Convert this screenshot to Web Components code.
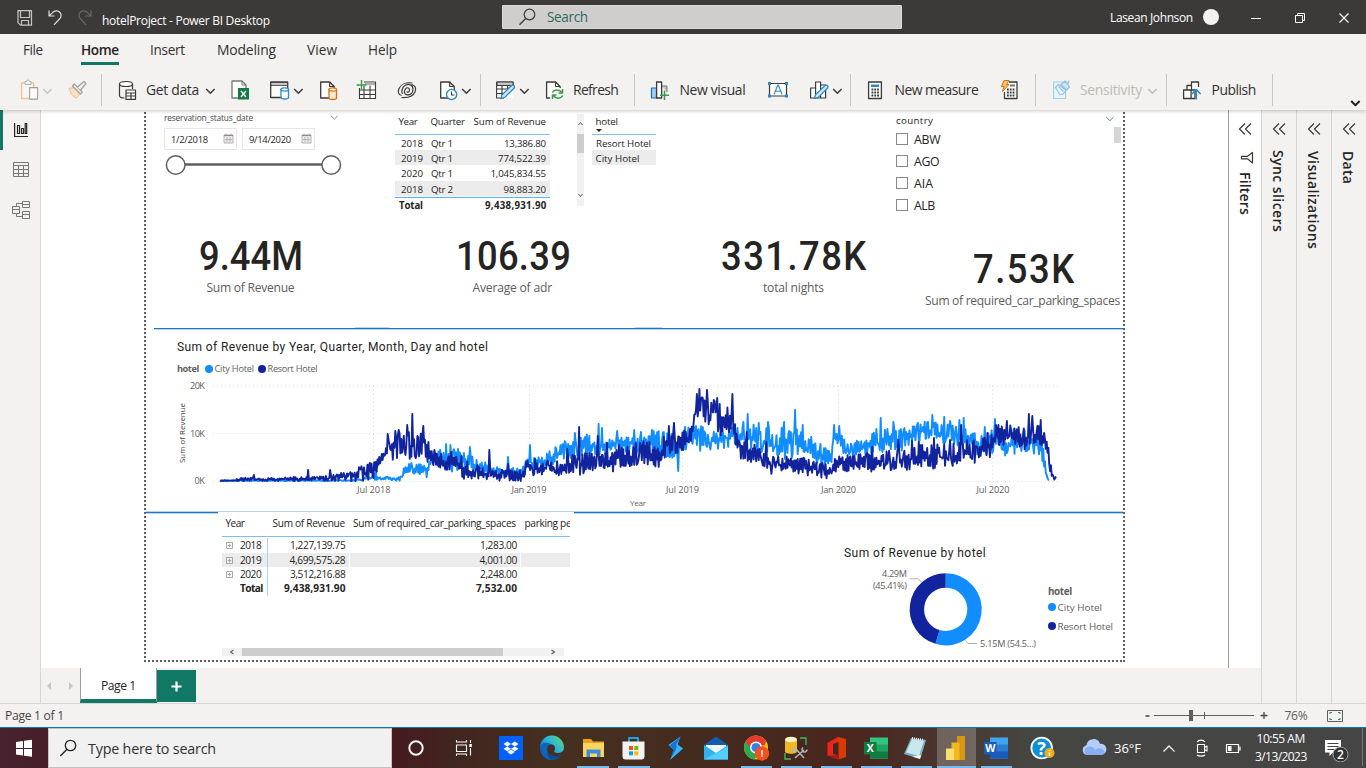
<!DOCTYPE html>
<html lang="en">
<head>
<meta charset="utf-8">
<title>hotelProject - Power BI Desktop</title>
<style>
html,body{margin:0;height:100%;overflow:hidden;background:#fff;font-family:"Open Sans","Noto Sans",sans-serif}
</style>
</head>
<body>
<desktop-shell></desktop-shell>
<script>
/* ---------- layout helpers: rows and columns that flow, gaps derived from start positions ---------- */
const FONT = {
  ui: ['"Open Sans","Noto Sans",sans-serif', 1.069, 0.293, 1.045],
  din: ['Roboto,"Open Sans",sans-serif', 0.928, 0.244, 1]
};
// text starting at x, sitting on baseline b, w wide
const t = (x, b, w, str, s = 13, c = '#252423', o = {}) => ({x, w, f: y => {
  const [ff, a, d, k] = FONT[o.font || 'ui'];
  s = +(s * k).toFixed(2);
  const A = Math.round(a * s), D = Math.round(d * s);
  return `<fit-text w="${w}" sx="${o.sx || 1}" style="margin-top:${b - y - A}px;font:${o.wt || 400} ${s}px/${A + D}px ${ff.replace(/"/g, "'")};color:${c}">${str}</fit-text>`;
}});
// picture whose viewBox uses window coordinates
const ic = (x, y0, w, h, inner) => ({x, w, f: y =>
  `<svg style="display:block;margin-top:${y0 - y}px" width="${w}" height="${h}" viewBox="${x} ${y0} ${w} ${h}" fill="none" stroke-linejoin="round">${inner}</svg>`});
const box = (x, y0, w, h, st, inner = '') => ({x, w, f: y =>
  `<div style="box-sizing:border-box;margin-top:${y0 - y}px;height:${h}px;${st}">${inner}</div>`});
const el = (x, y0, w, html) => ({x, w, f: y => `<div style="margin-top:${y0 - y}px">${html}</div>`});
const line = (y, items, x0) => {
  let c = x0;
  return items.map(i => {
    const m = i.x - c; c = i.x + i.w;
    return `<div style="flex:none;margin-left:${m}px;width:${i.w}px">${i.f(y)}</div>`;
  }).join('');
};
const R = (y, h, items, st = '') => ({y, h, items, st});
const col = (x0, y0, rows) => {
  let c = y0;
  return rows.map(r => {
    const m = r.y - c; c = r.y + r.h;
    return `<div style="display:flex;flex:none;align-items:flex-start;box-sizing:border-box;margin-top:${m}px;height:${r.h}px;${r.st}">${line(r.y, r.items, x0)}</div>`;
  }).join('');
};
const chev = (x, y, w = 9, c = '#3b3a39', sw = 1.5) => { x = Math.floor(x) - .5; return ic(x - .5, y - 4, w + 2, 9, `<path d="M${x + .7} ${y - 2}l${w / 2 - .3} ${w / 2 - .3} ${w / 2 - .3}-${w / 2 - .3}" stroke="${c}" stroke-width="${sw}"/>`); };

const define = (name, css, html) => customElements.define(name, class extends HTMLElement {
  constructor() { super(); this.attachShadow({mode: 'open'}); }
  connectedCallback() {
    this.shadowRoot.innerHTML = `<style>:host{display:flex;flex-direction:column}${css}</style>` + (typeof html === 'function' ? html(this) : html);
  }
});

customElements.define('fit-text', class extends HTMLElement {
  constructor() {
    super();
    this.attachShadow({mode: 'open'}).innerHTML = `<style>:host{display:block;white-space:nowrap;height:1px}:host([v]){height:auto;writing-mode:vertical-rl}
      span{display:inline-block;vertical-align:top;transform-origin:0 0}</style><span><slot></slot></span>`;
  }
  connectedCallback() {
    requestAnimationFrame(() => this.fit());
    this.fit();
  }
  fit() {
    const s = this.shadowRoot.querySelector('span'), n = this.textContent.length;
    if (n < 2) return;
    const w = +this.getAttribute('w'), sx = +(this.getAttribute('sx') || 1);
    s.style.letterSpacing = '0px'; s.style.transform = 'none';
    const r = s.getBoundingClientRect(), real = this.hasAttribute('v') ? r.height : r.width;
    s.style.letterSpacing = ((w / sx - real) / (n - .5)) + 'px';
    if (sx !== 1) s.style.transform = `scaleX(${sx})`;
  }
});

/* ---------- title bar ---------- */
define('title-bar', ':host{background:#3b3a39;height:34px}', col(0, 0, [R(0, 34, [
  ic(17, 9, 17, 17, '<path d="M18 10.7h13.5v14.5H20.500l-2.500-2.500z M20.500 11v6.500h9V11 M21.500 25v-4.500h7V25" stroke="#c8c6c4" stroke-width="1.2"/>'),
  ic(47, 9, 17, 17, '<path d="M49 10.500v5.500h5.500 M49.200 15.800l3-3c3-3.200 6.800-2 8.200.300 1.300 2.200.600 4.200-1 5.900l-5.400 5.800" stroke="#e1dfdd" stroke-width="1.200"/>'),
  ic(77, 9, 17, 17, '<path d="M91 10.500v5.500h-5.500 M90.800 15.800l-3-3c-3-3.200-6.800-2-8.200.300-1.300 2.200-.600 4.200 1 5.900l5.400 5.800" stroke="#6b6967" stroke-width="1.200"/>'),
  t(102, 25, 168, 'hotelProject - Power BI Desktop', 11.5, '#fff'),
  box(502, 5, 400, 24, 'background:#d0cecc;border:1px solid #dddbd9;border-radius:1px', col(503, 6, [R(6, 22, [
    ic(518, 7, 19, 20, '<circle cx="529.500" cy="14.500" r="5.300" stroke="#3b3a39" stroke-width="1.200"/><path d="M525.700 18.500L519.500 24.800" stroke="#3b3a39" stroke-width="1.300"/>'),
    t(547, 22, 41, 'Search', 13, '#2c6a5e')])])),
  t(1110, 22, 83, 'Lasean Johnson', 11.5, '#fff'),
  box(1203, 9, 16, 16, 'background:#f3f2f1;border-radius:8px'),
  ic(1250, 9, 12, 16, '<path d="M1251 18.500h10" stroke="#fff"/>'),
  ic(1294, 9, 13, 16, '<path d="M1295.500 15.500h7v7h-7z M1297.500 15v-1.500h7v7H1303" stroke="#fff" stroke-linejoin="miter"/>'),
  ic(1338, 9, 13, 17, '<path d="M1339.500 13.500l9 9m0-9l-9 9" stroke="#fff" stroke-width="1.200"/>')
])]));

/* ---------- ribbon ---------- */
const K = '#3b3a39', RT = '#323130';
const sep = x => box(x, 74, 1, 32, 'background:#c8c6c4');
const pen = (x, y) => `<path d="M${x} ${y}l1-3.600 9.500-9.400c2.200-1 3.600.800 2.700 2.500l-9.500 9.400z" fill="#cfe6f7" stroke="#2b88c8" stroke-width="1.300"/>`;
const doc = x => `<path d="M${x} 82h9l4.500 4.500V98H${x}z" fill="#fff" stroke="${K}" stroke-width="1.300"/><path d="M${x + 9} 82v4.500h4.500" stroke="${K}" stroke-width="1.200"/>`;
define('ribbon-bar', ':host{background:#f3f2f1;height:76px;box-shadow:0 1px 4px rgba(0,0,0,.22);position:relative;z-index:2}', col(0, 34, [
  R(34, 28, [
    t(23, 55, 20, 'File', 13, RT), t(81, 55, 38, 'Home', 13, '#252423', {wt: 600}), t(150, 55, 35, 'Insert', 13, RT),
    t(217, 55, 59, 'Modeling', 13.3, RT), t(307, 55, 30, 'View', 13, RT), t(368, 55, 29, 'Help', 13, RT)]),
  R(62, 3, [box(81, 62, 38, 3, 'background:#117865')]),
  R(74, 36, [
    ic(20, 79, 19, 22, '<path d="M21.600 83h12v15.500h-12z" fill="#faf6f0" stroke="#ecc49a" stroke-width="1.400"/><path d="M25 84.500v-3h1.500a1.400 1.400 0 0 1 3 0H31v3z" fill="#f3f2f1" stroke="#b3b0ad"/><path d="M29.600 87.600h8v11.500h-8z" fill="#fafafa" stroke="#a19f9d" stroke-width="1.100"/>'),
    chev(43, 91, 9, '#c8c6c4'),
    ic(67, 79, 21, 21, '<path d="M69 88.500l6-1 5.500 5.500-4 5c-3.500-1-6-4.500-7.500-9.500z" fill="#fbe0bb" stroke="#eabf8c"/><path d="M72.500 86l8 8 1.800-2-8-8z" fill="#f3f2f1" stroke="#a19f9d" stroke-width="1.200"/><path d="M77.500 87l6.500-5.500 2 2-5.500 6.500" stroke="#a19f9d" fill="#f3f2f1" stroke-width="1.200"/>'),
    sep(101),
    ic(118, 79, 19, 22, `<ellipse cx="126" cy="84" rx="6.500" ry="2.500" fill="#fff" stroke="${K}" stroke-width="1.200"/><path d="M119.500 84v11.500c0 1.500 2 2.500 5 2.500M132.500 84v5" stroke="${K}" stroke-width="1.200"/><path d="M126 90h9.500v9.300H126zM126 93h9.500M126 96h9.500M131 93v6" fill="#fff" stroke="${K}" stroke-width="1.200"/>`),
    t(146, 95, 53, 'Get data', 13.3, RT), chev(206, 91),
    ic(230, 79, 20, 22, `<path d="M232 81h10l4 4v13h-14z" fill="#fff" stroke="#797775" stroke-width="1.300"/><path d="M242 81v4h4" stroke="#797775"/><path d="M238 88h11v11.500h-11z" fill="#107c41"/><path d="M241 91l5 6m0-6l-5 6" stroke="#fff" stroke-width="1.400"/>`),
    ic(269, 79, 21, 22, `<path d="M270.700 82h17v15.500h-17z" fill="#fff" stroke="${K}" stroke-width="1.300"/><path d="M271 82.500h16.500v3H271z" fill="#c8c6c4" stroke="${K}" stroke-width=".8"/><path d="M281 89.500v8c0 2 7.500 2 7.500 0v-8z" fill="#fff" stroke="#2b88c8" stroke-width="1.300"/><ellipse cx="284.700" cy="89.500" rx="3.800" ry="1.600" fill="#fff" stroke="#2b88c8" stroke-width="1.200"/>`),
    chev(294, 91),
    ic(319, 79, 20, 22, doc(320.7) + '<path d="M329 89.500v8.500c0 2 7.500 2 7.500 0v-8.500z" fill="#fde9d2" stroke="#d8700d" stroke-width="1.300"/><ellipse cx="332.700" cy="89.500" rx="3.800" ry="1.600" fill="#fff" stroke="#d8700d" stroke-width="1.200"/>'),
    ic(356, 79, 22, 22, `<path d="M359.500 82h16v16.500h-16z" fill="#fff"/><path d="M364 82h11.500v16.500h-16V88M364 85.500v13M370 85.500v13M359.500 90h16M359.500 94.500h16" stroke="${K}" stroke-width="1.100"/><path d="M365 84h10" stroke="#b3b0ad" stroke-width="2.500"/><path d="M361.500 80v10M356.500 85h10" stroke="#3a9b4e" stroke-width="1.500"/>`),
    ic(397, 79, 20, 22, `<path d="M401.500 95.500c-3-.5-4-3.500-2.500-7 2-4.500 7.500-6.500 13.500-5.500M411.500 84.500c4 1 5 4 3.500 7.500-2 4.500-7 6-13.500 5.500M402.500 94c-1.500-2.500-.5-7 3-8.800s7.500-.2 7.500 4c0 4-3 6.300-6 5.600s-3.500-4-1.500-6 4.500-.800 4 1.500-2.500 2.200-2.500 1" stroke="${K}" stroke-width="1.200"/>`),
    ic(439, 79, 20, 22, doc(440.7) + '<circle cx="451.600" cy="94.500" r="5.100" fill="#fff" stroke="#2b88c8" stroke-width="1.400"/><path d="M451.500 91.500v3.500h3" stroke="#3b3a39" stroke-width="1.100"/>'),
    chev(462, 91), sep(480),
    ic(495, 79, 21, 22, `<path d="M496.600 82h16.500v16h-16.500z" fill="#fff"/><path d="M504 98h-7.400V82h16.500v5M496.600 89h11M496.600 93.500h7M502 86v12M507.500 86v4" stroke="${K}" stroke-width="1.100"/><path d="M497 82h16v3.500h-16z" fill="#c8c6c4" stroke="${K}"/>` + pen(501, 98.5)),
    chev(520, 91),
    ic(545, 79, 20, 22, `<path d="M550 98h-3.400V82h9l4.500 4.500V88" stroke="${K}" stroke-width="1.300" fill="#fff"/><path d="M555.500 82v4.500h4.500" stroke="${K}"/><path d="M552.300 92.500c2-3.500 7-3.500 9.500 0M562.500 89v4h-4M562.700 95.500c-2 3.500-7 3.500-9.500 0M552.500 99v-4h4" stroke="#3a9b4e" stroke-width="1.500"/>`),
    t(573, 95, 45.5, 'Refresh', 13.3, RT), sep(634),
    ic(650, 79, 20, 22, `<path d="M651.500 88h5v10h-5z" fill="#a3cdf0" stroke="#1a6fb8" stroke-width="1.200"/><path d="M661.500 86h5.500v6" fill="#c8c6c4" stroke="#797775"/><path d="M656.600 82h5v16h-5z" fill="#fff" stroke="${K}" stroke-width="1.300"/><path d="M664.500 90.500v9.500M660 95.300h9" stroke="#3a9b4e" stroke-width="1.500"/>`),
    t(679.5, 95, 66, 'New visual', 13.3, RT),
    ic(767, 79, 22, 20, `<path d="M769.500 83.500h17v12.500h-17z" fill="#fff" stroke="${K}" stroke-width="1.200"/><path d="M774 94.500l3.800-9.500h.5l3.800 9.500M775.500 91.300h5.200" stroke="#2b88c8" stroke-width="1.100"/><path d="M768 82h3v3h-3zM785 82h3v3h-3zM768 94.500h3v3h-3zM785 94.500h3v3h-3z" fill="#2b88c8"/>`),
    ic(809, 79, 20, 22, `<path d="M810.600 88h5v10h-5zM815.600 82h5v16h-5zM820.600 85h5v13h-5z" fill="#fff" stroke="${K}" stroke-width="1.200"/>` + pen(814.5, 98.5)),
    chev(833, 91), sep(850),
    ic(867, 79, 16, 22, `<path d="M868.600 82h12.800v16.500h-12.800z" fill="#fff" stroke="${K}" stroke-width="1.300"/><path d="M871 84.500h8v2.500h-8z" fill="#2b88c8"/><path d="M871.500 89.500h7.500M871.500 92.500h7.500M871.500 95.500h7.500" stroke="${K}" stroke-width="1.800" stroke-dasharray="1.800 1"/>`),
    t(894.5, 95, 84, 'New measure', 13.3, RT),
    ic(1000, 79, 20, 22, `<path d="M1009 82h8v16.500h-12.500V92" fill="#fff" stroke="${K}" stroke-width="1.300"/><path d="M1010 85.500h5" stroke="#797775" stroke-width="2"/><path d="M1007 89.500h8.500M1007 92.500h8.500M1007 95.500h8.500" stroke="${K}" stroke-width="1.800" stroke-dasharray="1.800 1"/><path d="M1004 80.500h5l-2.500 4h2.500l-6.500 7 1.500-5h-2.500z" fill="#fbc26b" stroke="#d8700d"/>`),
    sep(1035),
    ic(1052, 79, 20, 22, '<path d="M1063 82h-9.400v16.500h12V92" fill="#e9f3fb" stroke="#a9cfe8" stroke-width="1.200"/><path d="M1055.500 87.500l3-3 7.500 6-3 3.500-3 .5z" fill="#f3f8fc" stroke="#8fc3e4" stroke-width="1.200"/><path d="M1058.500 86.500l5 5M1061 84.500l5.500 5.500 3-3-4.500-6zM1064 82l4 1.500 1-3" stroke="#8fc3e4" fill="#cfe4f2" stroke-width="1.200"/>'),
    t(1080, 95, 62, 'Sensitivity', 13.3, '#bebbb8'), chev(1148, 91, 9, '#bebbb8'), sep(1166),
    ic(1182, 79, 20, 22, `<path d="M1191.500 90v-8h7v5M1191 90h-4v-4.500h4M1183.600 90h7.500v8.500h-7.500zM1191 90h4v8.500h-4" fill="#fff" stroke="${K}" stroke-width="1.300"/><path d="M1196.300 99.500v-10M1192 94l4.300-4.500 4.300 4.500" stroke="#2b88c8" stroke-width="1.500"/>`),
    t(1211.5, 95, 44.5, 'Publish', 13.3, RT), sep(1272),
    chev(1351, 103, 9, '#252423', 2)
  ])
]));

/* ---------- view rail ---------- */
define('view-rail', ':host{width:40px;flex:none;background:#f3f2f1;border-right:1px solid #d8d6d4}', col(0, 110, [
  R(110, 40, [box(0, 110, 3, 40, 'background:#117865'),
    ic(12, 121, 18, 18, '<path d="M14.600 123v13.500H28M17.500 133.500v-8h2v8zM21.500 133.500v-5h2v5zM25.200 133.500v-10h1.500v10z" stroke="#252423" stroke-width="1.200"/>')]),
  R(158, 24, [ic(12, 160, 19, 19, '<path d="M13.500 162.500h15v14h-15zM13.500 165.500h15M13.500 169.500h15M13.500 173.500h15M18.500 165.500v11M23.500 165.500v11" stroke="#797775" stroke-width="1"/>')]),
  R(198, 24, [ic(11, 200, 20, 20, '<path d="M12.500 206.500h7v7h-7zM12.500 209.500h7M22.500 201.500h7v6h-7zM22.500 204.500h7M22.500 211.500h7v7h-7zM22.500 214.500h7M16.500 206.500v-3h6M16.500 213.500v3h6" stroke="#797775" stroke-width="1"/>')])
]));

/* ---------- report visuals ---------- */
const cal = x => ic(x, 133, 12, 11, `<path d="M${x + 1} 135h9v8h-9z" fill="#f0ecec" stroke="#a3a1a8" stroke-width=".8"/><path d="M${x + 1} 135.500h9" stroke="#8a8886" stroke-width="1.200"/><path d="M${x + 4} 137v5M${x + 7} 137v5M${x + 2} 139.500h7M${x + 3} 133.500v2M${x + 8} 133.500v2" stroke="#b0aaa6" stroke-width=".8"/>`);
const inp = (x, w, str) => box(x, 128, 73, 22, 'border:1px solid #e6e6e6', col(x + 1, 129, [R(129, 20, [t(x + 7, 143, w, str, 9), cal(x + 59)])]));
define('date-slicer', '', col(164, 112, [
  R(112, 14, [t(164, 121, 89, 'reservation_status_date', 8, '#484644'), chev(331, 118, 7, '#8a8886', 1)]),
  R(128, 22, [inp(164, 37, '1/2/2018'), inp(242, 42, '9/14/2020')]),
  R(154, 23, [ic(164, 154, 180, 23, '<path d="M185 164.500h137" stroke="#605e5c" stroke-width="2.700"/><g fill="#fff" stroke="#605e5c" stroke-width="1.500"><circle cx="175.700" cy="165" r="9.300"/><circle cx="331.200" cy="165" r="9.300"/></g>')])
]));
const GRAY = 'background:#ececec;width:155px';
const qr = (y, yr, q, v, vw, st) => R(y - 12, 15, [t(401, y, 22, yr, 9.3), t(431, y, 22, q, 9.3), t(546 - vw, y, vw, v, 9.3)], st);
define('quarter-table', '', col(395, 112, [
  R(112, 22, [t(398.500, 125, 19, 'Year', 9.3), t(430.5, 125, 34.5, 'Quarter', 9.3), t(473.5, 125, 72.5, 'Sum of Revenue', 9.3)]),
  R(134, 1, [], 'background:#7fbdee'),
  qr(147, '2018', 'Qtr 1', '13,386.80', 42), qr(162, '2019', 'Qtr 1', '774,522.39', 48, GRAY),
  qr(177, '2020', 'Qtr 1', '1,045,834.55', 55.5), qr(193, '2018', 'Qtr 2', '98,883.20', 42.5, GRAY),
  R(197, 1, [], 'background:#5aaef3'),
  R(198, 14, [t(399, 209, 24, 'Total', 9.3, '#252423', {wt: 700}), t(485, 209, 61.5, '9,438,931.90', 9.3, '#252423', {wt: 700})])
]));
define('scroll-strip', ':host{width:7px;height:92px;background:#f1f1f1}', col(577, 114, [
  R(114, 20, [ic(577, 120, 7, 7, '<path d="M578.500 125l2-2.500 2 2.500" stroke="#605e5c" stroke-width="1"/>')]),
  R(134, 19, [], 'background:#cdcdcd'),
  R(190, 10, [ic(577, 192, 7, 7, '<path d="M578.500 194l2 2.500 2-2.500" stroke="#605e5c" stroke-width="1"/>')])]));
define('hotel-table', '', col(592, 112, [
  R(112, 22, [t(595.500, 125, 22.5, 'hotel', 9.3), ic(595, 128, 8, 5, '<path d="M596 129h6l-3 3z" fill="#252423"/>')]),
  R(134, 1, [], 'background:#7fbdee'),
  R(135, 15, [t(596, 147, 55, 'Resort Hotel', 9.3)]),
  R(150, 15, [t(595.5, 162, 44, 'City Hotel', 9.3)], 'background:#ececec')
]));
const ck = (y, n, w) => R(y - 8, 16, [box(896, y - 6, 12, 12, 'border:1px solid #8a8886'), t(914, y + 5, w, n, 11.8)]);
define('country-slicer', '', col(896, 112, [
  R(112, 13, [t(896, 124, 37, 'country', 9.3), chev(1106, 119, 8, '#5a86a8', 1)]),
  R(127, 3, [box(1114, 127, 7, 16, 'background:#d8d6d4')]),
  ck(139, 'ABW', 26.5), ck(161, 'AGO', 25.5), ck(183, 'AIA', 19), ck(205, 'ALB', 21)
]));
const kpi = (x, w, b, v, lx, lw, l) => {
  const x0 = Math.min(x, lx), W = Math.max(x + w, lx + lw) - x0;
  return el(x0, b - 40, W, `<kpi-card spec="${[x0, x, w, b, v, lx, lw, l].join('|')}"></kpi-card>`);
};
define('kpi-card', '', h => {
  const a = h.getAttribute('spec').split('|'), [x0, x, w, b] = a.map(Number);
  return col(x0, b - 40, [R(b - 40, 42, [t(x, b, w, a[4], 41.3, '#252423', {font: 'din', wt: 500, sx: .88})]),
    R(b + 8, 18, [t(+a[5], b + 22, +a[6], a[7], 11.6, '#605e5c')])]);
});

/* daily revenue lines: [x, low, high] envelope plus peak days */
const resort = [[220,481,480.5],[235,481,480],[240,481,478],[270,481,478],[305,481,477],[330,481,476],[350,480,472],[362,480,467],[373,479,463],[377,472,458],[382,460,452],[386,457,442],[395,459,436],[405,460,432],[412,456,436],[420,461,436],[427,460,440],[431,463,452],[440,468,454],[458,469,458],[464,478,462],[490,479,470],[522,480,471],[525,474,459],[540,475,461],[555,477,463],[565,473,458],[580,474,454],[600,472,452],[620,469,449],[640,465,444],[660,466,444],[668,456,434],[680,452,435],[692,442,428],[696,418,400],[705,425,398],[715,437,405],[725,435,408],[732,434,410],[736,445,428],[740,462,444],[750,460,444],[765,467,452],[772,473,458],[790,470,458],[810,475,460],[833,478,467],[836,470,455],[855,472,455],[880,470,452],[905,470,450],[920,468,447],[950,466,446],[965,464,444],[980,460,440],[992,455,435],[998,447,426],[1010,444,426],[1030,449,426],[1042,445,428],[1047,450,436],[1050,474,462],[1054,481,479],[1056,477,476]];
const city = [[220,481,480.5],[355,481,480],[365,480,477],[376,480,474],[382,480,477],[400,481,477],[404,474,468],[410,472,464],[425,473,464],[427,478,470],[430,464,456],[440,465,450],[450,472,450],[460,468,452],[470,470,457],[480,472,462],[500,476,468],[522,476,468],[528,470,456],[545,465,456],[560,462,444],[575,458,441],[585,457,436],[600,456,436],[610,450,440],[640,452,433],[660,458,434],[680,460,433],[690,440,426],[700,450,428],[710,450,433],[720,448,432],[735,445,426],[750,448,426],[770,456,428],[790,460,433],[800,456,432],[815,465,442],[825,468,450],[831,470,450],[834,450,434],[850,455,440],[865,455,438],[880,452,432],[900,450,428],[920,440,423],[940,442,425],[955,444,427],[970,452,432],[985,455,434],[1000,455,432],[1015,453,430],[1035,453,432],[1041,458,440],[1044,470,450],[1048,480,470],[1050,480,478]];
const rPeak = {254:475,308:470,330:470,344:473,388:434,395:431,399:430,407:425,412:414,417:436,423:426,434:450,451:452,461:456,489:450,508:464,567:449,579:427,598:436,607:443,619:445,627:447,640:443,669:426,674:423,697:394,699:389,703:398,707:390,714:400,717:398,720:404,732:394,747:432,766:442,820:465,872:447,898:440,912:441,919:442,934:438,950:440,961:425,967:440,987:433,996:425,1007:421,1029:414,1032:416,1041:420};
const cPeak = {376:471,411:463,446:444,450:445,458:449,470:447,508:457,530:445,576:441,568:444,575:433,599:424,602:428,617:431,634:430,652:430,678:471,696:426,743:422,748:414,759:423,768:422,784:422,795:410,803:425,834:425,839:426,876:429,881:418,893:422,917:425,932:415,944:417,950:421,959:420,964:418,985:427,995:419,997:428};
function daily(env, peaks, end, seed) {
  let s = seed, k = 0, d = '', flip = 0;
  const rnd = () => (s = (s * 16807) % 2147483647) / 2147483647;
  const todo = Object.keys(peaks).map(Number).sort((a, b) => a - b);
  for (let x = 220; x <= end; x += .847) {
    while (k < env.length - 2 && env[k + 1][0] < x) k++;
    const [a, l1, h1] = env[k], [b, l2, h2] = env[k + 1], f = Math.min(1, (x - a) / (b - a));
    const lo = l1 + (l2 - l1) * f, hi = h1 + (h2 - h1) * f, span = lo - hi, ex = span > 8 ? 1.5 : 0;
    flip = rnd() < .72 ? 1 - flip : flip;
    const r = flip ? .5 + rnd() * .62 : rnd() * .55;
    let y = lo + ex - (span + ex) * r;
    if (todo.length && todo[0] <= x + .4) y = peaks[todo.shift()];
    d += (d ? 'L' : 'M') + x.toFixed(1) + ' ' + Math.min(481, y).toFixed(1);
  }
  return d;
}
const tx = (x, y, w, s, str) => `<text x="${x}" y="${y}" font-size="${s}" textLength="${w}">${str}</text>`;
define('revenue-trend', 'text{font-family:"Open Sans",sans-serif;fill:#605e5c;stroke:none}', col(177, 335, [
  R(335, 22, [t(177, 351, 311, 'Sum of Revenue by Year, Quarter, Month, Day and hotel', 12, '#252423', {font: 'din'})]),
  R(362, 14, [t(177, 372, 22, 'hotel', 8.8, '#605e5c', {wt: 700}), box(205, 365, 8, 8, 'background:#118dff;border-radius:4px'),
    t(214.500, 372, 39.500, 'City Hotel', 8.8, '#605e5c'), box(258, 365, 8, 8, 'background:#12239e;border-radius:4px'), t(267.500, 372, 50, 'Resort Hotel', 8.8, '#605e5c')]),
  R(378, 132, [ic(170, 378, 900, 132,
    '<path d="M213 386h848M213 433.500h848M213 481.500h848M373.500 386v95M529.500 386v95M682.500 386v95M838.500 386v95M992.500 386v95" stroke="#dcdcdc" stroke-dasharray="1 3"/>' +
    tx(190, 389, 15, 9.2, '20K') + tx(190, 437, 15, 9.2, '10K') + tx(194.5, 484, 10.500, 9.2, '0K') +
    ['Jul 2018,357,33.5', 'Jan 2019,511.5,35', 'Jul 2019,666,33', 'Jan 2020,821,35', 'Jul 2020,976.500,33'].map(v => { const [n, x, w] = v.split(','); return tx(x, 493, w, 9.2, n); }).join('') +
    tx(630, 506, 16, 8, 'Year') +
    '<text transform="translate(184.500 463) rotate(-90)" font-size="7.800" textLength="60" style="fill:#484644">Sum of Revenue</text>' +
    `<path d="${daily(city, cPeak, 1050, 4711)}" stroke="#118dff" stroke-width="1.900"/>` +
    `<path d="${daily(resort, rPeak, 1056.500, 977)}" stroke="#12239e" stroke-width="1.900"/>`)])
]));

const plus = y => ic(225, y - 4, 9, 9, `<path d="M226.500 ${y - 3.5}h6v6h-6zM227.800 ${y - .5}h3.500M229.500 ${y - 2.2}v3.500" stroke="#a19f9d" stroke-width=".9"/>`);
const yr = (top, b, y, v, vw, p, pw, st) => R(top, 14.5, [plus(b - 3), t(240, b, 21.5, y, 9.7), box(267, top, 1, 15, 'background:#a8d2f5'), t(345.5 - vw, b, vw, v, 9.7),
  box(349, top, 1, 14.5, 'background:#fff'), t(517 - pw, b, pw, p, 9.7), box(520, top, 1, 14.5, 'background:#fff')], st);
define('year-matrix', ':host{background:#fff;width:352px;overflow:hidden}', col(222, 511, [
  R(511, 25, [t(225.5, 526, 19, 'Year', 9.7), t(272.5, 526, 72.5, 'Sum of Revenue', 9.7), t(353, 526, 163, 'Sum of required_car_parking_spaces', 9.7),
    box(524.5, 511, 45.5, 24, 'overflow:hidden', col(524.5, 511, [R(511, 24, [t(524.5, 526, 47, 'parking pe', 9.7)])]))]),
  R(535, 1, [], 'background:#7fbdee;width:348px'),
  yr(537, 548, '2018', '1,227,139.75', 55.5, '1,283.00', 37),
  yr(551.5, 562.5, '2019', '4,699,575.28', 56, '4,001.00', 37.5, 'background:#ececec;width:348px'),
  yr(566, 577, '2020', '3,512,216.88', 55.5, '2,248.00', 37),
  R(580.5, 15, [t(240, 591, 23, 'Total', 9.7, '#252423', {wt: 700}), box(267, 580.5, 1, 14, 'background:#a8d2f5'), t(284, 591, 61.500, '9,438,931.90', 9.7, '#252423', {wt: 700}), t(476, 591, 41, '7,532.00', 9.7, '#252423', {wt: 700})]),
  R(647, 8, [ic(228, 647, 8, 8, '<path d="M233.500 649l-3 2 3 2" stroke="#605e5c" stroke-width="1.100"/>'), box(242, 647, 261, 8, 'background:#cdcdcd'),
    ic(550, 647, 8, 8, '<path d="M551.500 649l3 2-3 2" stroke="#605e5c" stroke-width="1.100"/>')], 'background:#f1f1f1;width:342px')
]));
const ang = .5459 * 2 * Math.PI, ex = 945.7 + 28.8 * Math.sin(ang), ey = 609.3 - 28.8 * Math.cos(ang);
define('hotel-donut', 'text{font-family:"Open Sans",sans-serif;fill:#605e5c;stroke:none}', col(844, 540, [
  R(540, 24, [t(844, 557, 142, 'Sum of Revenue by hotel', 12, '#252423', {font: 'din'})]),
  R(566, 86, [ic(868, 566, 172, 86,
    `<path d="M945.700 580.500A28.800 28.800 0 1 1 ${ex} ${ey}" stroke="#118dff" stroke-width="14.400"/><path d="M${ex} ${ey}A28.800 28.800 0 0 1 945.700 580.500" stroke="#12239e" stroke-width="14.400"/>
     <path d="M910 578.800h8l4 3.500M965.500 640.500l2.500 3h9" stroke="#b3b0ad"/>` +
    tx(882, 577, 25, 9.2, '4.29M') + tx(873, 589, 34, 9.2, '(45.41%)') + tx(980, 647, 56, 9.2, '5.15M (54.5...)')),
    box(1048, 586, 70, 50, '', col(1048, 586, [R(586, 12, [t(1048, 595, 24, 'hotel', 9.4, '#605e5c', {wt: 700})]),
      R(602, 12, [box(1048, 603, 8, 8, 'background:#118dff;border-radius:4px'), t(1057.5, 611, 44.5, 'City Hotel', 9.4, '#605e5c')]),
      R(621, 12, [box(1048, 622, 8, 8, 'background:#12239e;border-radius:4px'), t(1057.5, 630, 55.5, 'Resort Hotel', 9.4, '#605e5c')])]))])
]));

const RULE = 'background:#1f74c4;border-bottom:1px solid #b9d8f3';
define('report-page', `:host{box-sizing:border-box;margin-left:103px;width:981px;height:552px;padding:0 2px;
  background:repeating-linear-gradient(180deg,transparent 0 2px,#605e5c 2px 4px) 0 0/2px 100% no-repeat,
  repeating-linear-gradient(180deg,transparent 0 2px,#605e5c 2px 4px) 979px 0/2px 100% no-repeat,
  repeating-linear-gradient(90deg,#605e5c 0 2px,transparent 2px 4px) 0 550px/100% 2px no-repeat}`, col(146, 110, [
  R(112, 104, [el(164, 112, 180, '<date-slicer></date-slicer>'), el(395, 112, 155, '<quarter-table></quarter-table>'),
    el(577, 114, 7, '<scroll-strip></scroll-strip>'), el(592, 112, 64, '<hotel-table></hotel-table>'), el(896, 112, 226, '<country-slicer></country-slicer>')]),
  R(230, 90, [kpi(199, 104, 270, '9.44M', 206.5, 88, 'Sum of Revenue'), kpi(456, 115, 270, '106.39', 472.5, 79.5, 'Average of adr'),
    kpi(721, 146, 270, '331.78K', 763, 61, 'total nights'), kpi(973, 102, 283, '7.53K', 925, 195, 'Sum of required_car_parking_spaces')]),
  R(327, 1, [box(355, 327, 34, 1, 'background:#b9d8f3'), box(635, 327, 27, 1, 'background:#b9d8f3')]),
  R(328, 2, [box(154, 328, 969, 2, RULE)]),
  R(335, 175, [el(177, 335, 890, '<revenue-trend></revenue-trend>')]),
  R(511, 1, [box(146, 511, 977, 1, 'background:#b0d2ef')]),
  R(512, 148, [box(146, 512, 72, 2, RULE), el(222, 512, 352, '<year-matrix></year-matrix>'), box(574, 512, 270, 2, RULE),
    el(844, 512, 279, `<div style="height:2px;box-sizing:border-box;${RULE}"></div><hotel-donut style="margin-top:26px"></hotel-donut>`)])
]));

/* ---------- page tabs ---------- */
define('page-tabs', ':host{background:#f3f2f1;height:35px;margin-top:6px}', col(41, 668, [R(668, 35, [
  ic(45, 680, 8, 12, '<path d="M51 682v8l-4-4z" fill="#c8c6c4"/>'), ic(67, 680, 8, 12, '<path d="M69 682v8l4-4z" fill="#c8c6c4"/>'),
  box(80, 668, 77, 35, 'background:#fff;border-left:1px solid #a19f9d;border-right:1px solid #a19f9d;border-bottom:4px solid #117865', col(81, 668, [R(668, 30, [t(101, 690, 35, 'Page 1', 11.6)])])),
  box(157, 670, 39, 32, 'background:#117865', col(157, 670, [R(670, 32, [ic(170, 680, 13, 13, '<path d="M176.500 681.500v10M171.500 686.500h10" stroke="#fff" stroke-width="2.200"/>')])]))
])]));

/* ---------- collapsed panes ---------- */
const dbl = x => ic(x, 121, 16, 16, `<path d="M${x + 7} 123.500l-5.500 5.500 5.500 5.500M${x + 13} 123.500l-5.500 5.500 5.500 5.500" stroke="#3b3a39" stroke-width="1.200"/>`);
define('side-pane', ':host{box-sizing:border-box;flex:none;height:593px}', h => {
  const [x, cx, y, w] = h.getAttribute('at').split(',').map(Number), name = h.getAttribute('name');
  const label = {x: cx - 10, w: 20, f: y0 => `<fit-text v w="${w}" style="margin-top:${y - y0}px;color:#252423;font:600 14px/20px 'Open Sans',sans-serif">${name}</fit-text>`};
  const funnel = name === 'Filters' ? [R(151, 14, [ic(1239, 151, 16, 14, '<path d="M1252.500 152.500v10.500l-5-4.200h-6v-2.500h6z" stroke="#3b3a39" stroke-width="1.200"/>')])] : [];
  return col(x + 1, 110, [R(121, 16, [dbl(x === 1228 ? 1238 : cx - 6)]), ...funnel, R(y, w, [label])]);
});
define('app-workspace', `:host{flex-direction:row;height:593px}.c{flex:1;display:flex;flex-direction:column;background:#fff}
  side-pane{background:#f3f2f1;border-left:1px solid #d8d6d4}.end side-pane{background:#fff;border-left-color:#a19f9d;height:558px}.end{width:33px;flex:none;background:#f3f2f1}`,
  `<view-rail></view-rail><div class="c"><report-page></report-page><page-tabs></page-tabs></div>
   <div class="end"><side-pane name="Filters" at="1228,1244.5,172,43"></side-pane></div>
   <side-pane name="Sync slicers" at="1261,1278,150,82" style="width:35px"></side-pane>
   <side-pane name="Visualizations" at="1296,1313,151,98" style="width:35px"></side-pane>
   <side-pane name="Data" at="1331,1347.5,151,33" style="width:35px"></side-pane>`);

/* ---------- status bar ---------- */
define('status-bar', ':host{box-sizing:border-box;background:#f3f2f1;height:24px;border-top:1px solid #d8d6d4}', col(0, 704, [R(704, 23, [
  t(5, 720, 59, 'Page 1 of 1', 11.6, '#484644'),
  ic(1144, 706, 126, 20, '<path d="M1145.500 716h4M1260.500 715.500h7M1264 712v7" stroke="#484644" stroke-width="1.300"/><path d="M1154 715.500h100M1204.500 712v7" stroke="#605e5c"/><path d="M1189 710h4v11h-4z" fill="#605e5c"/>'),
  t(1284.5, 720, 23, '76%', 11.6, '#605e5c'),
  ic(1326, 708, 18, 15, '<path d="M1327.500 710.500h15v11h-15z" stroke="#605e5c"/><path d="M1330 714v-1.500h2M1338 712.500h2v1.500M1340 718v1.500h-2M1332 719.500h-2V718" stroke="#3a8f5c" stroke-width="1.100"/>')
])]));

/* ---------- Windows taskbar ---------- */
const ti = (x, w, inner) => ic(x, 734, w, 28, inner);
const sheet = (x, a, b, c, L) => `<path d="M${x + 6} 737.500h18v21h-18z" fill="${a}"/><path d="M${x + 6} 744.500h18v14h-18z" fill="${b}"/><path d="M${x + 6} 751.500h18v7h-18z" fill="${c}"/><path d="M${x} 742h12.500v12.500H${x}z" fill="${c}"/><text x="${x + 6.3}" y="752" font-size="10.500" font-weight="700" font-family="Open Sans,sans-serif" text-anchor="middle" fill="#fff">${L}</text>`;
define('task-bar', ':host{box-sizing:border-box;height:41px;border-top:1px solid #0f75bd;background:linear-gradient(90deg,#48222e 0,#461f2a 40px,#451a20 392px,#41251f 450px,#45301f 560px,#44291f 740px,#4a261f 860px,#483c36 975px,#454642 1030px,#454545 1366px)}', col(0, 728, [R(728, 38, [
  ic(15, 738, 18, 20, '<path d="M16 742l7-1v7h-7zM24 740.800l8-1.100v8.300h-8zM16 749h7v6.500l-7-1zM24 749h8v7.800l-8-1.100z" fill="#fff"/>'),
  box(48, 728, 344, 40, 'background:#f1f1f1;border:1px solid #c4c4c4', col(49, 729, [R(729, 38, [
    ic(59, 738, 19, 20, '<circle cx="70.500" cy="745.500" r="5.200" stroke="#252423" stroke-width="1.300"/><path d="M66.800 749.500l-6.500 6.500" stroke="#252423" stroke-width="1.300"/>'),
    t(88, 754, 128, 'Type here to search', 13.7, '#323130')])])),
  ti(407, 18, '<circle cx="416" cy="748" r="6.700" stroke="#f5f5f5" stroke-width="2"/>'),
  ti(455, 18, '<path d="M456.500 740v2h10v-2M456.500 745h10v6.500h-10zM456.500 756v-2h10v2M470.500 740v3M470.500 748v7.500" stroke="#fff" stroke-width="1.100"/><path d="M469.300 744h2.500v3h-2.500z" fill="#fff"/>'),
  ti(499, 24, '<path d="M499 736h24v24h-24z" fill="#0061fe"/><path d="M503.500 744l3.700-2.400 3.800 2.400-3.800 2.400zM511 744l3.800-2.400 3.700 2.400-3.700 2.400zM503.500 748.800l3.700-2.400 3.800 2.400-3.800 2.400zM511 748.800l3.800-2.400 3.700 2.400-3.700 2.400zM507.200 752l3.800-2.400 3.800 2.400-3.800 2.400z" fill="#fff"/>'),
  ti(539, 26, '<defs><linearGradient id="e" x1="0" y1=".8" x2="1" y2=".1"><stop offset="0" stop-color="#0c6cc0"/><stop offset=".5" stop-color="#2bb5e0"/><stop offset="1" stop-color="#62dc5a"/></linearGradient></defs><path d="M540 748a12 12 0 0 1 24-1c.2 4-3 6-6.500 6-3 0-4-1.300-3-2.800 1.300-2 .5-5.700-3.500-6-5-.3-9 2-11 3.800z" fill="url(#e)"/><path d="M540 748c1-5 6-6.500 11-4-3 1-4.500 4-3.500 7.500 1.200 4.500 7 6 14 3.500-3 4-7 5.500-11 5-6-1-10.500-6-10.500-12z" fill="#0f63b8"/><path d="M547.500 751.500c1 4 6.500 5.500 14 3.500-3 4-7 5-10.500 4.500-3-1.500-4-5-3.500-8z" fill="#0b4a94"/>'),
  ti(581, 25, '<path d="M583 739h8l2 2.500h11V757h-21z" fill="#e8a31c"/><path d="M583 743h21v14h-21z" fill="#fcd462"/><path d="M586.500 749.500h14v7.500h-3.500v-3.500h-7v3.500h-3.500z" fill="#3a8fd9"/>'),
  ti(621, 25, '<path d="M629 742v-4h9v4" stroke="#1ea2e4" stroke-width="2"/><path d="M622.500 741.500h22V757a3 3 0 0 1-3 2.500h-16a3 3 0 0 1-3-2.500z" fill="#f3f3f3"/><path d="M629 746h4v4h-4z" fill="#f25022"/><path d="M634.300 746h4v4h-4z" fill="#7fba00"/><path d="M629 751.300h4v4h-4z" fill="#00a4ef"/><path d="M634.300 751.300h4v4h-4z" fill="#ffb900"/>'),
  ti(666, 18, '<path d="M680.500 736.500l-12 8.500 5 4.500 3.500-4z" fill="#41c4f7"/><path d="M680.500 736.500l-4.500 8.500 6.500 4-12.500 11 3.500-10.500-4-4z" fill="#1673dc"/><path d="M670 760l13-11.500-6-4.500-1 5.500z" fill="#35b9f5"/>'),
  ti(703, 26, '<path d="M704 745l12-8.500 12 8.500v14h-24z" fill="#0f5fae"/><path d="M706 745h20v8h-20z" fill="#f5f7fa"/><path d="M704 745l12 8 12-8v14.500h-24z" fill="#2fb2ee"/><path d="M704 759.500l24-13v13z" fill="#53cdf9"/>'),
  ti(743, 28, '<circle cx="756" cy="747.500" r="12" fill="#fbc116"/><path d="M756 747.500L745.600 741.500a12 12 0 0 1 20.800 0z" fill="#e33b2e"/><path d="M745.600 741.500a12 12 0 0 0 9 18l5-9z" fill="#2da94f"/><path d="M745.600 741.500h20.800l-2 4h-16z" fill="#e33b2e"/><circle cx="756" cy="747.500" r="6" fill="#fff"/><circle cx="756" cy="747.500" r="4.500" fill="#3b7de8"/><circle cx="762" cy="753.500" r="7.200" fill="#f4511e"/><path d="M762 750v7" stroke="#fff" stroke-width="1.300"/>'),
  ti(783, 28, '<path d="M785 739.500v12c0 3 12 3 12 0v-12z" fill="#f0b921"/><ellipse cx="791" cy="739.500" rx="6" ry="2.800" fill="#fff4c9"/><path d="M800 738h6v7M785 753v6h6" stroke="#3b9a4a" stroke-width="1.800"/><path d="M796 749l8 9M804 750l-9 8M794.500 747.500a2.200 2.200 0 1 0 2 3M803 747.500a2.500 2.500 0 1 0 4 2" stroke="#b5b5b5" stroke-width="1.500"/>'),
  ti(826, 21, '<path d="M827.500 743l11-6 7.500 2v18l-7.500 2.500-9-3.500z" fill="#d83b01"/><path d="M827.500 743l11-6v5l-6 2.500v10l-5 1.500z" fill="#f0231c"/><path d="M833 744l5.500-2v13.500l-5.500-1.500z" fill="#432720"/><path d="M829 755.500l10-.5v4.500z" fill="#b3121d"/>'),
  ti(864, 24, sheet(864, '#33c481', '#21a366', '#107c41', 'X')),
  ti(903, 25, '<path d="M911 738l15 2-6 19-16-5z" fill="#7ba9b8"/><path d="M912 739l12 2-5 15-13-3.500z" fill="#c9e6ed"/><path d="M926 740l-6 19-8-2.500 9-1.500z" fill="#eef3f4"/><path d="M912 738l12 2" stroke="#eee" stroke-dasharray="1 1" stroke-width="2"/>'),
  box(937, 728, 39, 38, 'background:rgba(255,255,255,.22)', col(937, 728, [R(728, 38, [ti(945, 21, '<path d="M957 736h8v24h-8z" fill="#d9960f"/><path d="M951.500 742.500h8V760h-8z" fill="#f0b921"/><path d="M946 748.500h8V760h-8z" fill="#fbdf6d"/>')])])),
  ti(984, 24, sheet(984, '#41a5ee', '#2b7cd3', '#185abd', 'W')),
  ti(1030, 25, '<circle cx="1041.700" cy="748" r="10.300" fill="#0c8fd4" stroke="#fff" stroke-width="1.800"/><text x="1041.500" y="755" font-size="18" font-weight="700" font-family="Open Sans,sans-serif" text-anchor="middle" fill="#fff">?</text><circle cx="1049.500" cy="753" r="5" fill="#f0ab1e"/><path d="M1049.500 750v1.200m0 1.200v3.500" stroke="#fff" stroke-width="1.400"/>'),
  ti(1081, 26, '<path d="M1087 755a5 5 0 0 1-.5-9.800 7 7 0 0 1 13.500-1.500 5.700 5.700 0 0 1 1.500 11.300z" fill="#b4cdfb"/><path d="M1085 749c3-4 9-3 10 1 3-3 8-2 10 2-1 2-2 3-4 3h-14a4.500 4.500 0 0 1-2-6z" fill="#8aaef3"/>'),
  t(1114, 753, 27, '36°F', 12.500, '#fff'),
  ti(1162, 14, '<path d="M1163.500 751.500l5.500-5.500 5.500 5.500" stroke="#fff" stroke-width="1.300"/>'),
  ti(1195, 14, '<path d="M1197.500 744.500h7v8h-7zM1204.500 747.500l2.500-1.500v5l-2.500-1.500M1197 742c2-2.500 6-2.500 8 0M1197 755c2 1.500 6 1.500 8 0" stroke="#fff" stroke-width="1.100"/>'),
  ti(1225, 18, '<path d="M1226.500 744.500h12v8h-12zM1240 746.500v4" stroke="#fff" stroke-width="1.200"/><path d="M1228 746h3.500v5h-3.500z" fill="#fff"/>'),
  box(1255, 728, 52, 38, '', col(1255, 728, [R(728, 20, [t(1256.5, 743, 48.5, '10:55 AM', 11.500, '#fff')]), R(748, 18, [t(1255, 761, 52, '3/13/2023', 11.500, '#fff')])])),
  ti(1324, 26, '<path d="M1325 740h16v12.500h-8l-3.500 3.500v-3.500h-4.500z" fill="#fff"/><path d="M1327.500 743.500h11M1327.500 746.500h11M1327.500 749.500h7" stroke="#454545"/><circle cx="1340.500" cy="754.500" r="7.500" fill="#333" stroke="#a5a5a5"/><text x="1340.500" y="759" font-size="12" font-weight="600" font-family="Open Sans,sans-serif" text-anchor="middle" fill="#fff">2</text>'),
  box(1362, 728, 1, 38, 'background:#7a7a7a')
]), R(766, 2, [[577, 32], [618, 32], [741, 31], [781, 31], [821, 31], [861, 31], [901, 31], [937, 39], [981, 31]].map(([x, w]) => box(x, 766, w, 2, 'background:#76b9ed')))]));

define('desktop-shell', ':host{width:1366px;height:768px;overflow:hidden}title-bar,ribbon-bar,app-workspace,status-bar,task-bar{flex:none}',
  '<title-bar></title-bar><ribbon-bar></ribbon-bar><app-workspace></app-workspace><status-bar></status-bar><task-bar></task-bar>');
</script>
</body>
</html>
